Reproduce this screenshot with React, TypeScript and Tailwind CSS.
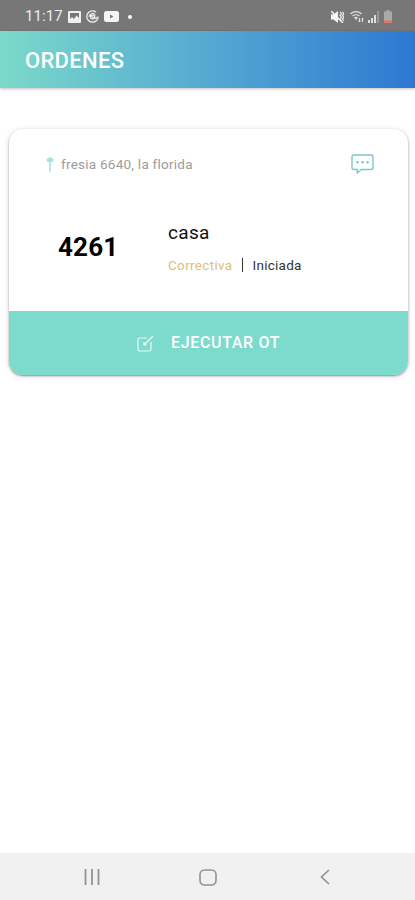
import React from "react";

const StatusBar = () => {
  return (
    <div className="flex h-[31px] shrink-0 items-center bg-[#777777] pt-[2px] pl-[25px] pr-[23px] text-[#ececec]">
      <span className="w-[43px] text-[15px] leading-none tracking-[0.1px]">11:17</span>
      <svg className="h-3 w-[13px]" viewBox="0 0 13 12">
        <rect width="13" height="12" rx="1" fill="#efefef" />
        <path d="M2 2h9v5L8.5 4.5 6 8 4 6 2 8z" fill="#777" />
      </svg>
      <svg className="ml-[5px] h-[13px] w-[13px]" viewBox="0 0 13 13" fill="none" stroke="currentColor">
        <circle cx="6.5" cy="6.5" r="5.7" strokeWidth="1.3" strokeDasharray="30 5.8" />
        <path d="M3 7c.5-3 3-4 5.5-3.5M8.7 4v4c1 .8 2 0 2.3-1M3.5 4.5l5 4.5" strokeWidth="1.2" />
        <circle cx="6.5" cy="7" r="1.9" strokeWidth="1.2" />
      </svg>
      <svg className="ml-[5px] h-[11px] w-[15px]" viewBox="0 0 15 11">
        <rect width="15" height="11" rx="2.5" fill="#f5f5f5" />
        <path d="M6 3.5l3.5 2L6 7.5z" fill="#777" />
      </svg>
      <span className="ml-[9px] h-1 w-1 rounded-full bg-white" />
      <div className="ml-auto flex items-center">
        <svg className="h-3 w-[13px]" viewBox="0 0 13 12" fill="none">
          <path d="M0 3.5h2.5L7 0v12L2.5 8.5H0z" fill="#f5f5f5" />
          <path d="M0 0l12 12" stroke="#f5f5f5" strokeWidth="1.5" />
          <path d="M9 1l1.5 1.7L9 4.5l1.5 1.7L9 8l1.5 2M11.5 1L13 2.7l-1.5 1.8L13 6.2 11.5 8l1.5 2" stroke="#eeeeee" strokeWidth="1.2" />
        </svg>
        <svg className="ml-[6px] h-3 w-[14px]" viewBox="0 0 14 12" fill="none" stroke="#dedede">
          <path d="M.5 3c3.5-3 7.5-3 11 0M2.5 5c2.3-1.8 4.7-1.8 7 0" strokeWidth="1.4" />
          <path d="M4 6.5q2-1.5 4 0l-2 2.5z" fill="#dedede" stroke="none" />
          <path d="M9.5 7v4M8.2 9.5l1.3 1.5 1.3-1.5M12.5 11V7M11.5 8.3l1-1.3 1 1.3" strokeWidth="1" />
        </svg>
        <svg className="ml-[4px] h-3 w-[11px]" viewBox="0 0 11 12">
          <path d="M0 9h2v3H0zM3 7h2v5H3zM6 4h2v8H6z" fill="#dedede" />
          <path d="M9 0h2v12H9z" fill="#989898" />
        </svg>
        <svg className="ml-[5px] h-[13px] w-2" viewBox="0 0 8 13">
          <path d="M2.5 0h3v1.5H8V13H0V1.5h2.5z" fill="#aaaaaa" />
          <path d="M0 10.5h8V13H0z" fill="#e37466" />
        </svg>
      </div>
    </div>
  );
};

const OrderCard = () => {
  return (
    <div className="mr-[7px] ml-[9px] mt-[41px] flex h-[246px] flex-col overflow-hidden rounded-[14px] bg-white shadow-[0_1px_2px_rgba(0,0,0,0.4),0_1px_6px_rgba(0,0,0,0.12)]">
      <div className="flex h-[182px] flex-col pl-[37px] pr-[34px]">
        <div className="mt-[24px] flex h-[22px] items-center">
          <svg className="h-[15px] w-2" viewBox="0 0 8 15" fill="none" stroke="#8de0d5">
            <path d="M4 .5L7 2.5 6.5 4.5h-5L1 2.5z" fill="#a5e7de" strokeWidth=".8" />
            <path d="M4 4v11" strokeWidth="1.3" />
          </svg>
          <span className="ml-[7px] text-[13.5px] tracking-[0.25px] text-[#9c9c9c]">fresia 6640, la florida</span>
          <svg className="ml-auto h-5 w-[23px]" viewBox="0 0 23 20" fill="none" stroke="#7bc5cf" strokeWidth="1.4" strokeLinejoin="round">
            <path d="M3 1h17q2 0 2 2v10.5q0 2-2 2h-9.5L6.3 19v-3.500H3q-2 0-2-2V3q0-2 2-2z" />
            <path d="M6.5 8.3h.1M11.5 8.3h.1M16.5 8.3h.1" strokeWidth="2.5" strokeLinecap="round" />
          </svg>
        </div>
        <div className="mt-[46px] flex">
          <div className="mt-[10px] w-[122px] pl-3 text-[26px] leading-8 font-bold tracking-[0.2px] text-black">4261</div>
          <div className="flex flex-col">
            <span className="text-[19px] leading-6 tracking-[0.3px] text-[#111111]">casa</span>
            <div className="mt-[10px] flex items-center text-[13.5px] leading-5">
              <span className="tracking-[0.33px] text-[#dcc077]">Correctiva</span>
              <span className="ml-[9px] h-[14px] w-px bg-[#333333]" />
              <span className="ml-[10px] tracking-[0.25px] text-[#333333]">Iniciada</span>
            </div>
          </div>
        </div>
      </div>
      <button className="flex h-[64px] items-center bg-[#7ddbce] pl-[128px] text-white">
        <svg className="h-[17px] w-[17px]" viewBox="0 0 17 17" fill="none" stroke="#e6faf7" strokeWidth="1.2">
          <path d="M10 3H2.5Q1 3 1 4.5v10q0 1.5 1.5 1.5h10q1.5 0 1.5-1.5V7" />
          <path d="M7.5 9.5L16 1M7 7v3h3" />
        </svg>
        <span className="ml-[17px] text-[16px] font-medium tracking-[0.65px]">EJECUTAR OT</span>
      </button>
    </div>
  );
};

const NavigationBar = () => {
  return (
    <div className="mt-auto flex h-[47px] items-center bg-[#f1f1f1] pl-[84px] pt-px text-[#929292]">
      <svg className="h-4 w-4" viewBox="0 0 16 16" stroke="currentColor" strokeWidth="1.8">
        <path d="M1.5 0v16M8 0v16M14.5 0v16" />
      </svg>
      <svg className="ml-[99px] h-[17px] w-[18px]" viewBox="0 0 18 17" fill="none" stroke="currentColor" strokeWidth="1.6">
        <rect x="1" y="1" width="16" height="15" rx="4.5" />
      </svg>
      <svg className="ml-[103px] h-4 w-[10px]" viewBox="0 0 10 16" fill="none" stroke="currentColor" strokeWidth="1.7">
        <path d="M9 1L1.5 8 9 15" />
      </svg>
    </div>
  );
};

const App = () => {
  return (
    <div className="flex h-[900px] w-[415px] flex-col overflow-hidden bg-white font-['Roboto',sans-serif]">
      <StatusBar />
      <header className="flex h-[57px] shrink-0 items-center bg-linear-to-r from-[#7bdac9] via-[#55a8d1] to-[#2e78d2] pl-[25px] pt-px shadow-[0_1px_3px_rgba(0,0,0,0.25)]">
        <h1 className="text-[22px] font-medium tracking-[0.3px] text-white">ORDENES</h1>
      </header>
      <OrderCard />
      <NavigationBar />
    </div>
  );
};

export default App;
